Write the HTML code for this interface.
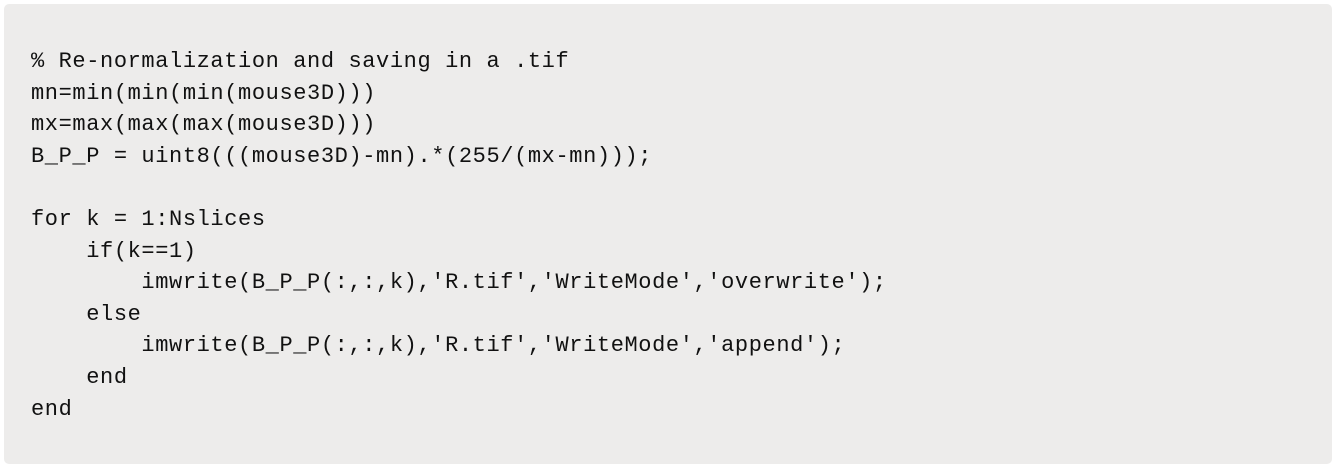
<!DOCTYPE html>
<html><head><meta charset="utf-8"><style>
html,body{margin:0;padding:0;background:#fff;width:1336px;height:468px;overflow:hidden}
.box{position:absolute;left:4px;top:4px;width:1328px;height:460px;background:#edeceb;border-radius:5px}
pre{position:absolute;left:31px;top:46px;margin:0;font-family:"Liberation Mono",monospace;font-size:22px;letter-spacing:0.6px;line-height:31.6px;color:#111}
</style></head><body>
<div class="box"></div>
<pre>% Re-normalization and saving in a .tif
mn=min(min(min(mouse3D)))
mx=max(max(max(mouse3D)))
B_P_P = uint8(((mouse3D)-mn).*(255/(mx-mn)));

for k = 1:Nslices
    if(k==1)
        imwrite(B_P_P(:,:,k),'R.tif','WriteMode','overwrite');
    else
        imwrite(B_P_P(:,:,k),'R.tif','WriteMode','append');
    end
end</pre>
</body></html>
